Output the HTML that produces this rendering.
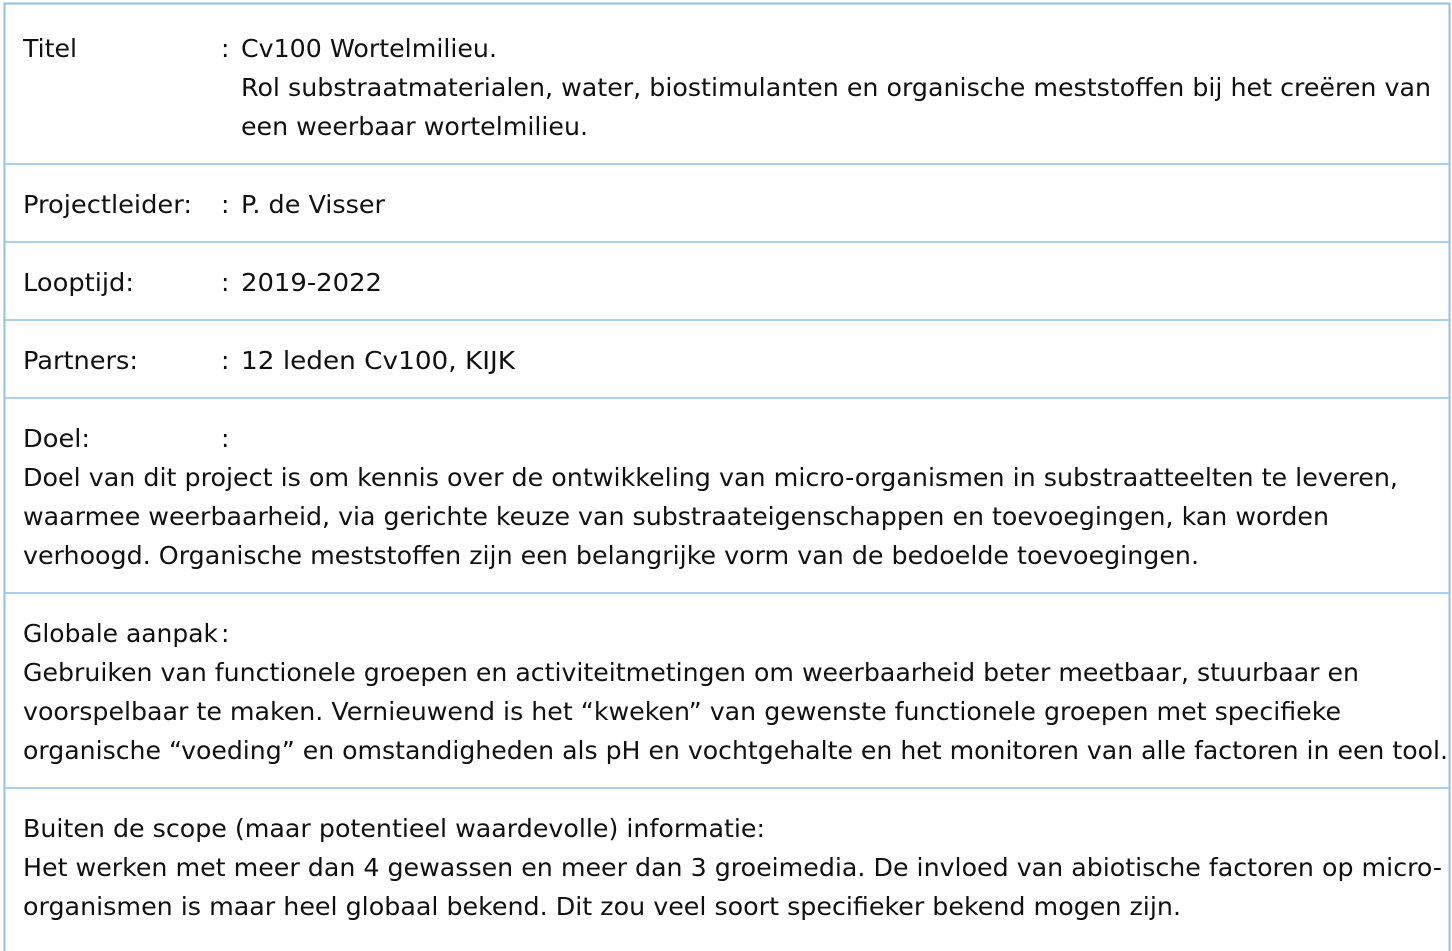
<!DOCTYPE html>
<html><head><meta charset="utf-8"><style>
html,body{margin:0;padding:0;background:#fff;}
svg{display:block}
text{font-family:"DejaVu Sans","Liberation Sans",sans-serif;font-size:25px;fill:#111;}
</style></head><body>
<svg width="1452" height="951" viewBox="0 0 1452 951" xmlns="http://www.w3.org/2000/svg">
<rect x="4.5" y="3.5" width="1445" height="960" fill="none" stroke="#8fc2e6" stroke-width="2"/>
<g stroke="#a9d0ec" stroke-width="2">
<line x1="5" y1="164" x2="1449" y2="164"/>
<line x1="5" y1="242" x2="1449" y2="242"/>
<line x1="5" y1="320" x2="1449" y2="320"/>
<line x1="5" y1="398" x2="1449" y2="398"/>
<line x1="5" y1="593" x2="1449" y2="593"/>
<line x1="5" y1="788" x2="1449" y2="788"/>
</g>
<text x="23" y="57" textLength="54" lengthAdjust="spacingAndGlyphs">Titel</text>
<text x="221" y="57">:</text>
<text x="241" y="57" textLength="256" lengthAdjust="spacingAndGlyphs">Cv100 Wortelmilieu.</text>
<text x="241" y="96" textLength="1190" lengthAdjust="spacingAndGlyphs">Rol substraatmaterialen, water, biostimulanten en organische meststoffen bij het creëren van</text>
<text x="241" y="135" textLength="347" lengthAdjust="spacingAndGlyphs">een weerbaar wortelmilieu.</text>
<text x="23" y="213" textLength="169" lengthAdjust="spacingAndGlyphs">Projectleider:</text>
<text x="221" y="213">:</text>
<text x="241" y="213" textLength="144" lengthAdjust="spacingAndGlyphs">P. de Visser</text>
<text x="23" y="291" textLength="111" lengthAdjust="spacingAndGlyphs">Looptijd:</text>
<text x="221" y="291">:</text>
<text x="241" y="291" textLength="141" lengthAdjust="spacingAndGlyphs">2019-2022</text>
<text x="23" y="369" textLength="115" lengthAdjust="spacingAndGlyphs">Partners:</text>
<text x="221" y="369">:</text>
<text x="241" y="369" textLength="274" lengthAdjust="spacingAndGlyphs">12 leden Cv100, KIJK</text>
<text x="23" y="447" textLength="67" lengthAdjust="spacingAndGlyphs">Doel:</text>
<text x="221" y="447">:</text>
<text x="23" y="486" textLength="1375" lengthAdjust="spacingAndGlyphs">Doel van dit project is om kennis over de ontwikkeling van micro-organismen in substraatteelten te leveren,</text>
<text x="23" y="525" textLength="1306" lengthAdjust="spacingAndGlyphs">waarmee weerbaarheid, via gerichte keuze van substraateigenschappen en toevoegingen, kan worden</text>
<text x="23" y="564" textLength="1176" lengthAdjust="spacingAndGlyphs">verhoogd. Organische meststoffen zijn een belangrijke vorm van de bedoelde toevoegingen.</text>
<text x="23" y="642" textLength="195" lengthAdjust="spacingAndGlyphs">Globale aanpak</text>
<text x="221" y="642">:</text>
<text x="23" y="681" textLength="1336" lengthAdjust="spacingAndGlyphs">Gebruiken van functionele groepen en activiteitmetingen om weerbaarheid beter meetbaar, stuurbaar en</text>
<text x="23" y="720" textLength="1318" lengthAdjust="spacingAndGlyphs">voorspelbaar te maken. Vernieuwend is het “kweken” van gewenste functionele groepen met specifieke</text>
<text x="23" y="759" textLength="1425" lengthAdjust="spacingAndGlyphs">organische “voeding” en omstandigheden als pH en vochtgehalte en het monitoren van alle factoren in een tool.</text>
<text x="23" y="837" textLength="742" lengthAdjust="spacingAndGlyphs">Buiten de scope (maar potentieel waardevolle) informatie:</text>
<text x="23" y="876" textLength="1419" lengthAdjust="spacingAndGlyphs">Het werken met meer dan 4 gewassen en meer dan 3 groeimedia. De invloed van abiotische factoren op micro-</text>
<text x="23" y="915" textLength="1158" lengthAdjust="spacingAndGlyphs">organismen is maar heel globaal bekend. Dit zou veel soort specifieker bekend mogen zijn.</text>
</svg>
</body></html>
